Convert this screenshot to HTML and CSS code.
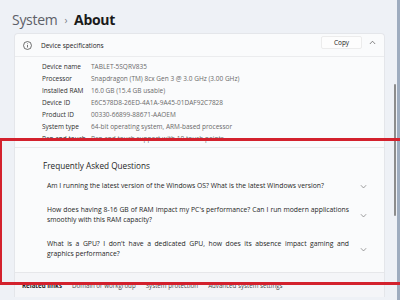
FILE: index.html
```html
<!DOCTYPE html>
<html lang="en">
<head>
<meta charset="utf-8">
<title>System › About</title>
<link rel="stylesheet" href="styles.css">
</head>
<body>
<div class="window">
  <header class="crumb">
    <span class="parent">System</span>
    <span class="sep">›</span>
    <span class="current">About</span>
  </header>

  <section class="card">
    <div class="card-head">
      <svg class="info" viewBox="0 0 10 10" width="9" height="9" aria-hidden="true">
        <circle cx="5" cy="5" r="4.4" fill="none" stroke="#3a3a3a" stroke-width="0.8"/>
        <line x1="5" y1="4.3" x2="5" y2="7.2" stroke="#3a3a3a" stroke-width="0.8"/>
        <circle cx="5" cy="2.9" r="0.5" fill="#3a3a3a"/>
      </svg>
      <span class="card-title">Device specifications</span>
      <button class="copy">Copy</button>
      <svg class="chev" viewBox="0 0 8 5" width="7" height="5" aria-hidden="true">
        <polyline points="1,4.2 4,1 7,4.2" fill="none" stroke="#555" stroke-width="0.8"/>
      </svg>
    </div>

    <dl class="specs">
      <div class="row"><dt>Device name</dt><dd>TABLET-5SQRV835</dd></div>
      <div class="row"><dt>Processor</dt><dd>Snapdragon (TM) 8cx Gen 3 @ 3.0 GHz (3.00 GHz)</dd></div>
      <div class="row"><dt>Installed RAM</dt><dd>16.0 GB (15.4 GB usable)</dd></div>
      <div class="row"><dt>Device ID</dt><dd>E6C578D8-26ED-4A1A-9A45-01DAF92C7828</dd></div>
      <div class="row"><dt>Product ID</dt><dd>00330-66899-88671-AAOEM</dd></div>
      <div class="row"><dt>System type</dt><dd>64-bit operating system, ARM-based processor</dd></div>
      <div class="row"><dt>Pen and touch</dt><dd>Pen and touch support with 10 touch points</dd></div>
    </dl>

    <div class="faq">
      <h2 class="faq-title">Frequently Asked Questions</h2>
      <div class="q">
        <p>Am I running the latest version of the Windows OS? What is the latest Windows version?</p>
        <svg class="chev" viewBox="0 0 8 5" width="7" height="5" aria-hidden="true"><polyline points="1,1 4,4.2 7,1" fill="none" stroke="#777" stroke-width="0.8"/></svg>
      </div>
      <div class="q">
        <p>How does having 8-16 GB of RAM impact my PC's performance? Can I run modern applications smoothly with this RAM capacity?</p>
        <svg class="chev" viewBox="0 0 8 5" width="7" height="5" aria-hidden="true"><polyline points="1,1 4,4.2 7,1" fill="none" stroke="#777" stroke-width="0.8"/></svg>
      </div>
      <div class="q">
        <p>What is a GPU? I don't have a dedicated GPU, how does its absence impact gaming and graphics performance?</p>
        <svg class="chev" viewBox="0 0 8 5" width="7" height="5" aria-hidden="true"><polyline points="1,1 4,4.2 7,1" fill="none" stroke="#777" stroke-width="0.8"/></svg>
      </div>
    </div>

    <nav class="related">
      <span class="rel-title">Related links</span>
      <a>Domain or workgroup</a>
      <a>System protection</a>
      <a>Advanced system settings</a>
    </nav>
  </section>

  <div class="scrollbar"></div>
  <div class="highlight"></div>
</div>
</body>
</html>
```

FILE: styles.css
```css
html, body {
  margin: 0;
  padding: 0;
}

body {
  width: 400px;
  height: 300px;
  overflow: hidden;
  background: #eef1f6;
  font-family: "Open Sans", "Noto Sans", sans-serif;
  color: #1b1b1b;
}

.window {
  position: relative;
  height: 300px;
  box-sizing: border-box;
  border-right: 3px solid #9eacbf;
}

.crumb {
  height: 27px;
  padding: 6px 0 0 12px;
  display: flex;
  align-items: center;
  font-size: 14px;
  letter-spacing: -0.3px;
  gap: 7px;
}

.parent {
  color: #5d6068;
}

.sep {
  color: #7a7d84;
  font-size: 10px;
}

.current {
  font-weight: 700;
  color: #1a1a1a;
}

.card {
  margin: 0 12px 0 14px;
  background: #fafbfc;
  border: 1px solid #e4e6ea;
  border-bottom: none;
  border-radius: 4px 4px 0 0;
}

.card-head {
  height: 22px;
  display: flex;
  align-items: center;
  padding: 0 8px 0 8px;
  border-bottom: 1px solid #ebecee;
  font-size: 6.5px;
}

.info {
  display: block;
  flex: none;
}

.card-title {
  margin-left: 9px;
  color: #222;
}

.copy {
  margin-left: auto;
  width: 41px;
  height: 13px;
  padding: 0;
  font: inherit;
  font-size: 6.5px;
  color: #222;
  background: #fdfdfd;
  border: 1px solid #ececec;
  border-radius: 2px;
  margin-top: -6px;
}

.card-head .chev {
  margin-left: 7px;
  margin-top: -6px;
  display: block;
}

.specs {
  margin: 0;
  padding: 4px 0 2px 27px;
  font-size: 6.5px;
  line-height: 12px;
}

.row {
  display: flex;
}

.row dt {
  width: 49px;
  color: #2e2e2e;
}

.row dd {
  margin: 0;
  color: #6a6a6a;
}

.faq {
  border-top: 1px solid #e9eaec;
  padding: 12px 0 6px 0;
}

.faq-title {
  margin: 0 0 2px 28px;
  font-size: 8.2px;
  line-height: 12px;
  font-weight: 500;
  color: #1e1e1e;
}

.q {
  display: flex;
  align-items: center;
  padding: 7px 0 7px 32px;
}

.q p {
  margin: 0;
  width: 302px;
  font-size: 6.8px;
  line-height: 10px;
  text-align: justify;
  color: #1f1f1f;
}

.q .chev {
  margin-left: 11px;
  display: block;
}

.related {
  border-top: 1px solid #e6e7ea;
  background: #f4f5f8;
  height: 24px;
  display: flex;
  align-items: center;
  gap: 10px;
  padding-left: 7px;
  font-size: 6.2px;
}

.rel-title {
  font-weight: 700;
  color: #222;
}

.related a {
  color: #4a4a4a;
}

.scrollbar {
  position: absolute;
  left: 394px;
  top: 84px;
  width: 1.5px;
  height: 132px;
  border-radius: 1px;
  background: #8c8c8c;
}

.highlight {
  position: absolute;
  left: 0;
  top: 138px;
  width: 420px;
  height: 147px;
  box-sizing: border-box;
  border: 3px solid #d3212d;
  border-left-width: 2px;
}
```
